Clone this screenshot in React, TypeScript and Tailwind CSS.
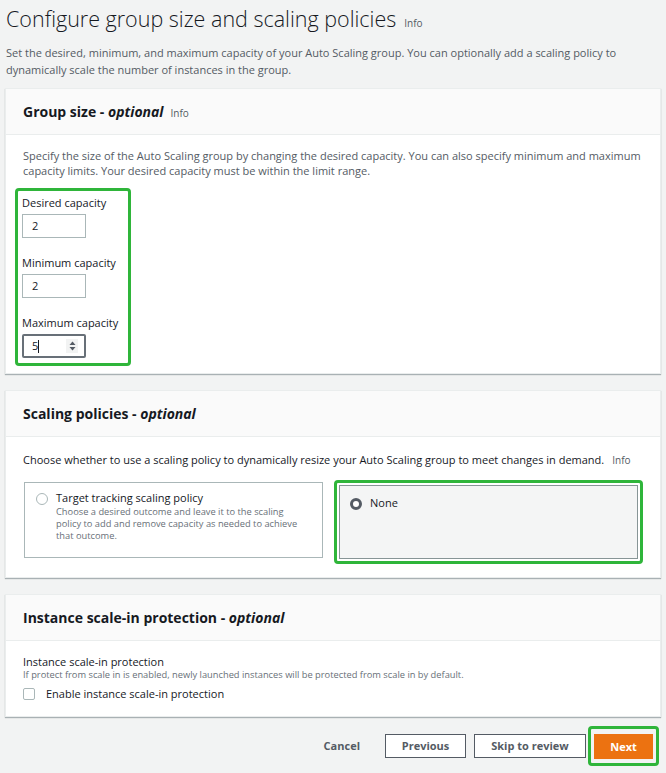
import React from 'react';

const font = { fontFamily: '"Open Sans", "Liberation Sans", sans-serif' };

const Info = ({ className = '' }: { className?: string }) => (
  <span className={`font-normal not-italic text-[10px] text-[#545b64] ${className}`}>Info</span>
);

const Panel: React.FC<{ title: React.ReactNode; children: React.ReactNode; className?: string }> = ({ title, children, className = '' }) => (
  <div className={`mx-[5px] bg-white border border-[#eaeded] shadow-[0_1px_1px_rgba(0,28,36,0.3)] ${className}`}>
    <div className="h-[46px] px-[17px] flex items-center bg-[#fafafa] border-b border-[#eaeded]">
      <h2 className="text-[14px] font-bold text-[#16191f] flex items-baseline gap-[7px]">{title}</h2>
    </div>
    {children}
  </div>
);

const Spinner = () => (
  <span className="w-[12px] h-[14px] bg-[#f2f3f3] flex items-center justify-center">
    <svg width="7" height="10" viewBox="0 0 7 10">
      <path d="M3.5 0.5 L6.5 4 L0.5 4 Z" fill="#545b64" />
      <path d="M0.5 6 L6.5 6 L3.5 9.5 Z" fill="#545b64" />
    </svg>
  </span>
);

const NumberField: React.FC<{ label: string; value: string; focused?: boolean }> = ({ label, value, focused }) => (
  <div className="flex flex-col">
    <label className="text-[11px] text-[#16191f] leading-[14px]">{label}</label>
    <div
      className={`mt-[4px] w-[64px] h-[24px] flex items-center pr-[6px] text-[11px] text-[#16191f] bg-white ${
        focused ? 'border-[2px] border-[#687078] rounded-[2px] pl-[8px]' : 'border border-[#aab7b8] pl-[9px]'
      }`}
    >
      <span className="flex-1 flex items-center">
        {value}
        {focused && <span className="inline-block w-px h-[13px] bg-[#16191f]" />}
      </span>
      {focused && <Spinner />}
    </div>
  </div>
);

const btn = 'h-[24px] border border-[#545b64] bg-white text-[11px] font-bold text-[#545b64]';

export default function App() {
  return (
    <div className="w-[666px] h-[773px] bg-[#f2f3f3] overflow-hidden pt-[4px]" style={font}>
      <div className="px-[6px]">
        <h1 className="text-[21.5px] font-light text-[#16191f] leading-[30px] flex items-baseline gap-[8px]">
          Configure group size and scaling policies <Info className="text-[9.5px]" />
        </h1>
        <p className="mt-[6px] text-[11px] leading-[17px] text-[#545b64] pr-[40px]">
          Set the desired, minimum, and maximum capacity of your Auto Scaling group. You can optionally add a scaling policy to dynamically scale the number of instances in the group.
        </p>
      </div>

      <Panel
        className="mt-[10px]"
        title={
          <>
            <span>
              Group size - <em className="italic">optional</em>
            </span>
            <Info />
          </>
        }
      >
        <div className="px-[17px] pt-[13px] pb-[7px]">
          <p className="text-[11px] leading-[15px] text-[#545b64]">
            Specify the size of the Auto Scaling group by changing the desired capacity. You can also specify minimum and maximum capacity limits. Your desired capacity must be within the limit range.
          </p>
          <div className="mt-[10px] -ml-[8px] w-[116px] border-[3px] border-[#2fb53a] rounded-[4px] pl-[4px] pt-[5px] pb-[5px] flex flex-col gap-[18px]">
            <NumberField label="Desired capacity" value="2" />
            <NumberField label="Minimum capacity" value="2" />
            <NumberField label="Maximum capacity" value="5" focused />
          </div>
        </div>
      </Panel>

      <Panel
        className="mt-[16px]"
        title={
          <span>
            Scaling policies - <em className="italic">optional</em>
          </span>
        }
      >
        <div className="px-[17px] pt-[15px] pb-[13px]">
          <p className="text-[11px] leading-[16px] text-[#16191f] flex gap-[8px]">
            Choose whether to use a scaling policy to dynamically resize your Auto Scaling group to meet changes in demand.
            <Info className="text-[#545b64]" />
          </p>
          <div className="mt-[12px] flex gap-[11px] items-start">
            <div className="ml-[1px] mt-[2px] w-[299px] h-[76px] border border-[#aab7b8] flex gap-[8px] px-[11px] pt-[8px]">
              <span className="mt-[2px] w-[12px] h-[12px] rounded-full border border-[#aab7b8] shrink-0" />
              <div className="pr-[12px]">
                <div className="text-[11px] leading-[14px] text-[#16191f]">Target tracking scaling policy</div>
                <div className="text-[9.3px] leading-[12px] text-[#687078] mt-[1px]">
                  Choose a desired outcome and leave it to the scaling policy to add and remove capacity as needed to achieve that outcome.
                </div>
              </div>
            </div>
            <div className="flex-1 border-[3px] border-[#2fb53a] rounded-[4px] p-[2px]">
              <div className="h-[74px] border border-[#879596] bg-[#f4f5f5] flex gap-[8px] px-[10px] pt-[10px]">
                <span className="mt-[2px] w-[12px] h-[12px] rounded-full border-[3px] border-[#545b64] shrink-0 bg-white" />
                <span className="text-[11px] leading-[14px] text-[#16191f]">None</span>
              </div>
            </div>
          </div>
        </div>
      </Panel>

      <Panel
        className="mt-[16px]"
        title={
          <span>
            Instance scale-in protection - <em className="italic">optional</em>
          </span>
        }
      >
        <div className="px-[17px] pt-[14px] pb-[13px]">
          <div className="text-[11px] leading-[14px] text-[#16191f]">Instance scale-in protection</div>
          <div className="text-[9.3px] leading-[12px] text-[#687078]">
            If protect from scale in is enabled, newly launched instances will be protected from scale in by default.
          </div>
          <label className="mt-[5px] flex items-center gap-[11px] text-[11px] text-[#16191f]">
            <span className="w-[12px] h-[12px] border border-[#aab7b8] rounded-[2px] bg-white" />
            Enable instance scale-in protection
          </label>
        </div>
      </Panel>

      <div className="mt-[9px] flex justify-end items-center pr-[7px]">
        <button className="text-[11px] font-bold text-[#545b64] mr-[25px]">Cancel</button>
        <button className={`${btn} w-[81px] mr-[8px]`}>Previous</button>
        <button className={`${btn} w-[112px] mr-[2px]`}>Skip to review</button>
        <div className="border-[3px] border-[#2fb53a] rounded-[4px] px-[3px] py-[4px]">
          <button className="h-[25px] w-[59px] bg-[#ec7211] text-[11px] font-bold text-white">Next</button>
        </div>
      </div>
    </div>
  );
}
